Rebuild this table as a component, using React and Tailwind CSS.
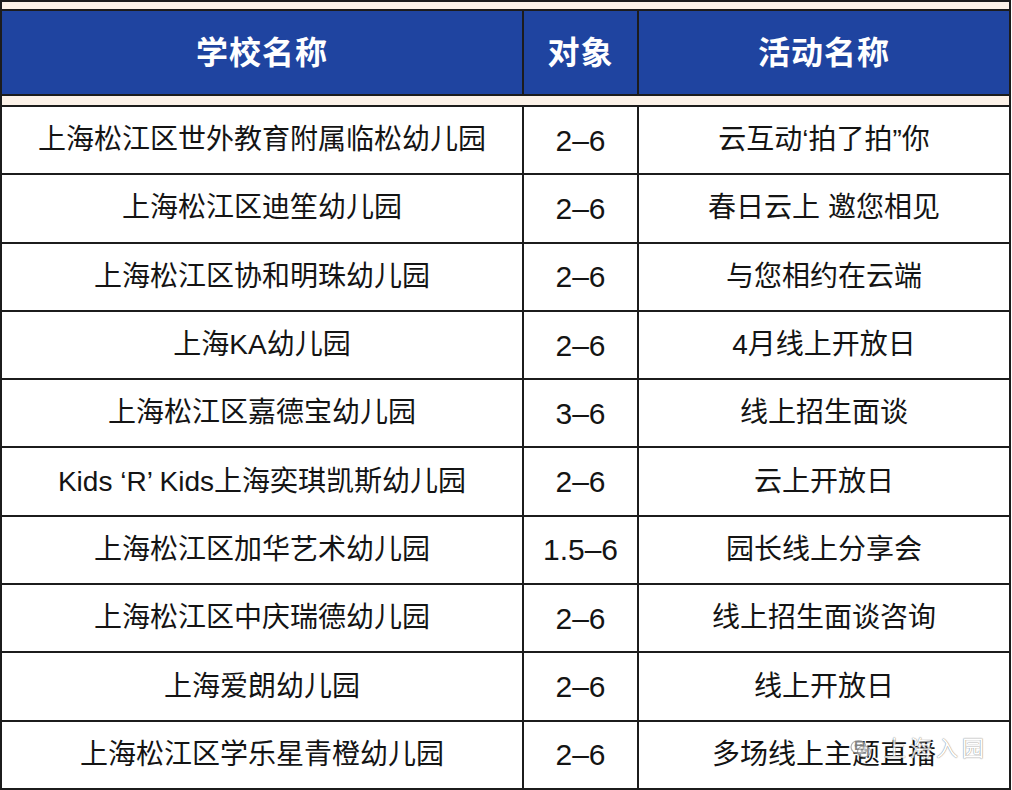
// 学校线上活动一览表
const rows = [
  ['上海松江区世外教育附属临松幼儿园', '2–6', '云互动‘拍了拍”你'],
  ['上海松江区迪笙幼儿园', '2–6', '春日云上 邀您相见'],
  ['上海松江区协和明珠幼儿园', '2–6', '与您相约在云端'],
  ['上海KA幼儿园', '2–6', '4月线上开放日'],
  ['上海松江区嘉德宝幼儿园', '3–6', '线上招生面谈'],
  ['Kids ‘R’ Kids上海奕琪凯斯幼儿园', '2–6', '云上开放日'],
  ['上海松江区加华艺术幼儿园', '1.5–6', '园长线上分享会'],
  ['上海松江区中庆瑞德幼儿园', '2–6', '线上招生面谈咨询'],
  ['上海爱朗幼儿园', '2–6', '线上开放日'],
  ['上海松江区学乐星青橙幼儿园', '2–6', '多场线上主题直播'],
]

const font = "font-['Liberation_Sans','Noto_Sans_CJK_SC',sans-serif]"

function WechatMark() {
  return (
    <svg width="22" height="20" viewBox="0 0 22 20" fill="none" stroke="#9a9a9a" strokeWidth="1.2">
      <ellipse cx="8.5" cy="8" rx="7.5" ry="6.5" fill="#fff" fillOpacity="0.6" />
      <ellipse cx="14" cy="12.5" rx="6.5" ry="5.5" fill="#fff" fillOpacity="0.6" />
      <circle cx="6" cy="6.5" r="0.9" fill="#9a9a9a" />
      <circle cx="11" cy="6.5" r="0.9" fill="#9a9a9a" />
      <circle cx="12" cy="11.5" r="0.8" fill="#9a9a9a" />
      <circle cx="16" cy="11.5" r="0.8" fill="#9a9a9a" />
    </svg>
  )
}

export default function App() {
  return (
    <div className={`relative w-[1011px] h-[790px] border-2 border-[#1c1c1c] bg-white flex flex-col ${font}`}>
      {/* 顶部米色条 */}
      <div className="h-[7px] bg-[#fcf2e8] border-b-2 border-[#1c1c1c] box-content" />

      {/* 表头 */}
      <div className="h-[83px] bg-[#1f44a0] flex text-white font-bold text-[32px] tracking-[1px]">
        <div className="w-[520px] flex items-center justify-center">学校名称</div>
        <div className="w-[117px] border-x-2 border-[#1c1c1c] flex items-center justify-center">对象</div>
        <div className="flex-1 flex items-center justify-center">活动名称</div>
      </div>

      <div className="h-[9px] bg-[#fcf2e8] border-y-2 border-[#1c1c1c] box-content" />

      {/* 表格内容 */}
      <div className="flex-1 flex flex-col">
        {rows.map((r, i) => (
          <div
            key={i}
            className={`flex-1 flex text-[#141414] text-[28px] ${i < rows.length - 1 ? 'border-b-2 border-[#1c1c1c]' : ''}`}
          >
            <div className="w-[520px] flex items-center justify-center whitespace-nowrap">{r[0]}</div>
            <div className="w-[117px] border-x-2 border-[#1c1c1c] flex items-center justify-center text-[30px]">{r[1]}</div>
            <div className="flex-1 flex items-center justify-center whitespace-nowrap">{r[2]}</div>
          </div>
        ))}
      </div>

      {/* 水印 */}
      <div className="absolute left-[848px] top-[730px] flex items-center gap-[12px] opacity-80">
        <WechatMark />
        <span className="text-[22px] text-white tracking-[4px] [text-shadow:0_0_1px_#777,0_0_1px_#777]">上海入园</span>
      </div>
    </div>
  )
}
